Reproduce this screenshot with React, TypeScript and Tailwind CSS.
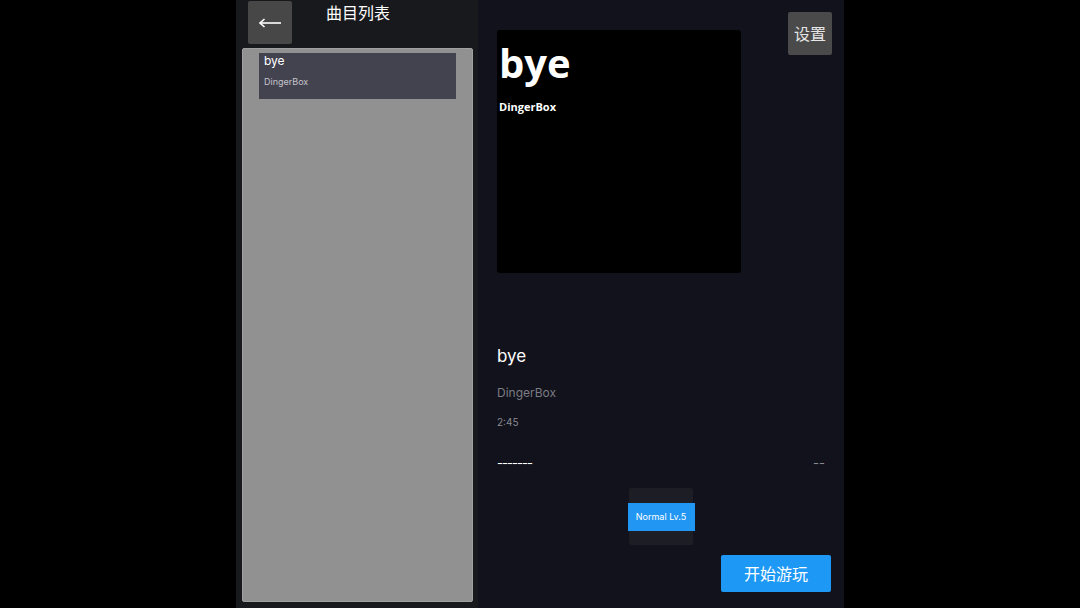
import { useState } from 'react';

type Song = { id: number; title: string; artist: string; length: string };

const songs: Song[] = [{ id: 1, title: 'bye', artist: 'DingerBox', length: '2:45' }];

const font = { fontFamily: 'Inter, "Noto Sans CJK SC", sans-serif' };

export default function App() {
  const [selected] = useState(0);
  const song = songs[selected];

  return (
    <div className="w-full h-[608px] bg-black flex justify-center overflow-hidden" style={font}>
      <div className="w-[608px] h-full flex">
        {/* Song list */}
        <div className="w-[242px] h-full bg-[#18191d] flex flex-col">
          <div className="h-[47px] flex items-start shrink-0">
            <button className="ml-[12px] mt-[1px] w-[44px] h-[43px] bg-[#474747] rounded-[2px] flex items-center justify-center">
              <svg width="23" height="10" viewBox="0 0 23 10" fill="none" stroke="white" strokeWidth="1.6">
                <path d="M1 5h21" />
                <path d="M5.5 1L1 5l4.5 4" />
              </svg>
            </button>
            <h1 className="ml-[34px] mt-[3px] text-[16px] leading-[20px] text-white">曲目列表</h1>
          </div>
          <div className="ml-[6px] mr-[5px] mb-[6px] mt-[1px] flex-1 bg-[#919191] rounded-[2px] border border-[#a0a0a0] pt-[4px]">
            {songs.map((s, i) => (
              <div
                key={s.id}
                className={`ml-[16px] w-[197px] h-[46px] px-[5px] ${i === selected ? 'bg-[#43424f]' : 'bg-[#555]'}`}
              >
                <div className="text-[12px] leading-[15px] text-white">{s.title}</div>
                <div className="mt-[8px] text-[9px] leading-[12px] text-[#c4c4cc]">{s.artist}</div>
              </div>
            ))}
          </div>
        </div>

        {/* Detail */}
        <div className="flex-1 h-full bg-[#11121b] flex flex-col">
          <div className="flex items-start justify-between pl-[19px] pr-[12px]">
            <div className="mt-[30px] w-[244px] h-[243px] bg-black rounded-[3px] pl-[2px]" style={{ fontFamily: '"Open Sans", sans-serif' }}>
              <div className="mt-[8px] text-[40px] leading-[50px] font-bold text-white">{song.title}</div>
              <div className="mt-[12px] text-[11px] leading-[14px] font-bold text-white">{song.artist}</div>
            </div>
            <button className="mt-[12px] w-[44px] h-[43px] bg-[#4a4a4a] rounded-[2px] text-[16px] text-[#e6e6e6]">
              设置
            </button>
          </div>

          <div className="pl-[19px] mt-[72px]">
            <div className="text-[17px] leading-[22px] text-white">{song.title}</div>
            <div className="mt-[18px] text-[12px] leading-[16px] text-[#7c7c84]">{song.artist}</div>
            <div className="mt-[14px] text-[10px] leading-[14px] text-[#8a8a92]">{song.length}</div>
          </div>

          <div className="mt-[27px] pl-[19px] pr-[19px] flex justify-between items-center h-[14px]">
            <span className="text-[13px] leading-none text-white tracking-[-1px]">-------</span>
            <span className="text-[13px] leading-none text-[#8a8a92]">--</span>
          </div>

          <div className="mt-[18px] flex justify-center">
            <div className="w-[64px] h-[57px] bg-[#1c1d25] rounded-[2px] flex items-center justify-center">
              <div className="w-[67px] h-[28px] shrink-0 bg-[#2196f3] flex items-center justify-center text-[9px] text-white">
                Normal Lv.5
              </div>
            </div>
          </div>

          <div className="mt-[10px] pr-[13px] flex justify-end">
            <button className="w-[110px] h-[37px] bg-[#1e98f5] rounded-[2px] text-[16px] text-white">开始游玩</button>
          </div>
        </div>
      </div>
    </div>
  );
}
